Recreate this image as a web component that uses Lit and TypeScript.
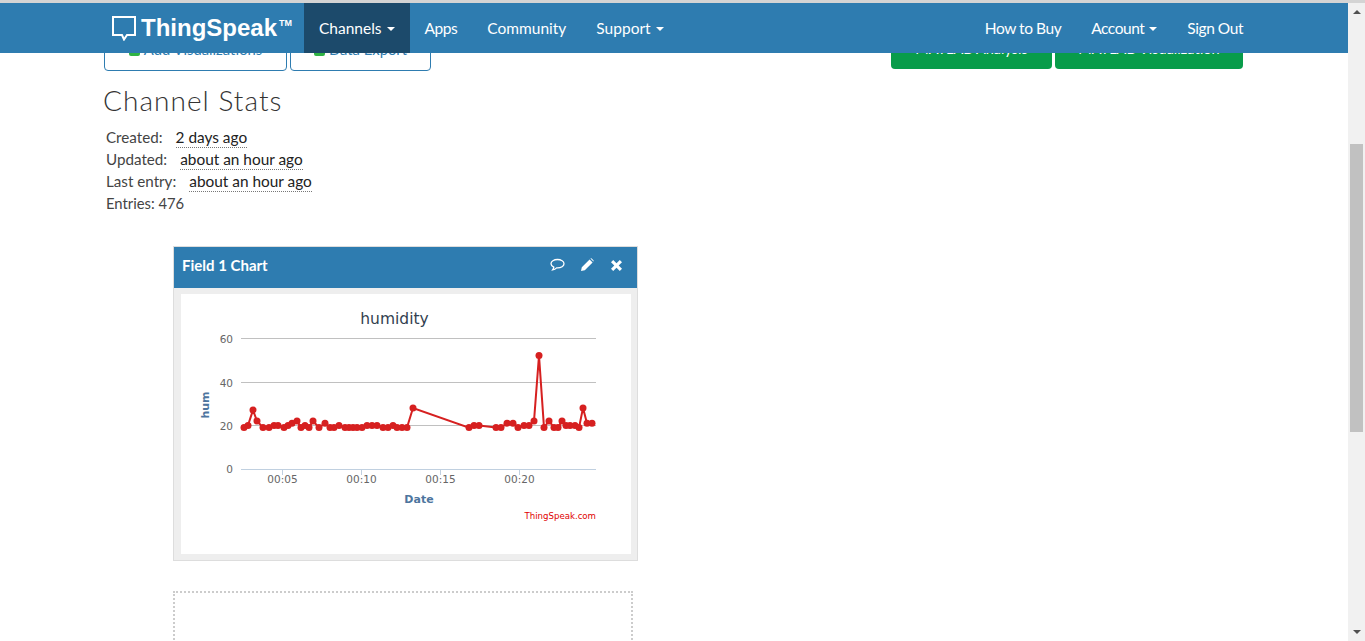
import { LitElement, html, css, svg } from "lit";
import { customElement } from "lit/decorators.js";

// humidity readings as [x pixel, value], read off the chart
const POINTS: [number, number][] = [
  [244, 19], [248, 20], [253, 27], [257, 22], [263, 19], [269, 19], [274, 20], [278, 20],
  [284, 19], [288, 20], [292, 21], [297, 22], [301, 19], [305, 20], [309, 19], [313, 22],
  [319, 19], [325, 21], [330, 19], [334, 19], [339, 20], [345, 19], [349, 19], [353, 19],
  [357, 19], [362, 19], [367, 20], [372, 20], [377, 20], [383, 19], [388, 19], [393, 20],
  [397, 19], [402, 19], [407, 19], [413, 28], [469, 19], [474, 20], [479, 20], [496, 19],
  [501, 19], [507, 21], [513, 21], [518, 19], [524, 20], [529, 20], [534, 22], [539, 52],
  [544, 19], [549, 22], [554, 19], [558, 19], [562, 22], [566, 20], [570, 20], [575, 20],
  [579, 19], [583, 28], [587, 21], [592, 21],
];

const valueY = (v: number) => 469 - v * 2.18;

@customElement("field-chart")
export class FieldChart extends LitElement {
  static styles = css`
    :host {
      display: block;
      background: #fff;
      height: 260px;
    }
    svg {
      display: block;
    }
    text {
      font-family: "DejaVu Sans", sans-serif;
    }
    .title {
      font-size: 15.5px;
      fill: #333f50;
    }
    .tick {
      font-size: 10.5px;
      fill: #666;
    }
    .axis {
      font-size: 11px;
      font-weight: bold;
      fill: #4d759e;
    }
    .credit {
      font-size: 8.6px;
      fill: #e00000;
    }
  `;

  render() {
    const line = POINTS.map(([x, v]) => `${x},${valueY(v).toFixed(1)}`).join(" ");
    return html`<svg width="450" height="260" viewBox="181 294 450 260">
      <text class="title" x="394.5" y="324" text-anchor="middle">humidity</text>
      ${[60, 40, 20].map(
        (v) => svg`
          <line x1="241" x2="596" y1=${Math.round(valueY(v)) + 0.5} y2=${Math.round(valueY(v)) + 0.5} stroke="#c0c0c0" />
          <text class="tick" x="233" y=${valueY(v) + 5} text-anchor="end">${v}</text>`,
      )}
      <line x1="241" x2="596" y1="469.5" y2="469.5" stroke="#c0d0e0" />
      <text class="tick" x="233" y="473" text-anchor="end">0</text>
      ${[
        [282.5, "00:05"],
        [361.5, "00:10"],
        [440.5, "00:15"],
        [519.5, "00:20"],
      ].map(
        ([x, label]) => svg`
          <line x1=${x} x2=${x} y1="470" y2="475" stroke="#c0d0e0" />
          <text class="tick" x=${x} y="483" text-anchor="middle">${label}</text>`,
      )}
      <text class="axis" x="419" y="503" text-anchor="middle">Date</text>
      <text class="axis" transform="translate(209 405) rotate(-90)" text-anchor="middle">hum</text>
      <text class="credit" x="596" y="519" text-anchor="end">ThingSpeak.com</text>
      <polyline points=${line} fill="none" stroke="#d62020" stroke-width="2" />
      ${POINTS.map(
        ([x, v]) => svg`<circle cx=${x} cy=${valueY(v).toFixed(1)} r="3.5" fill="#d62020" />`,
      )}
    </svg>`;
  }
}

@customElement("app-root")
export class AppRoot extends LitElement {
  static styles = css`
    :host {
      display: block;
      position: relative;
      height: 641px;
      overflow: hidden;
      background: #fff;
      color: #444;
      font-family: Lato, "Open Sans", sans-serif;
      font-size: 15.2px;
    }

    .strip {
      position: absolute;
      top: 0;
      left: 0;
      right: 0;
      height: 3px;
      background: #d4d4d4;
      z-index: 3;
    }

    .navbar {
      position: absolute;
      top: 3px;
      left: 0;
      right: 17px;
      height: 50px;
      background: #2e7cb0;
      z-index: 2;
      display: flex;
      align-items: stretch;
      padding-left: 112px;
      padding-right: 90px;
      color: #fff;
    }
    .brand {
      display: flex;
      align-items: center;
      width: 192px;
    }
    .brand-name {
      font-family: "Liberation Sans", Arial, sans-serif;
      font-weight: bold;
      font-size: 24px;
      margin-left: 5px;
    }
    .brand-tm {
      font-family: "Liberation Sans", Arial, sans-serif;
      font-size: 9px;
      font-weight: bold;
      margin-top: -10px;
      margin-left: 2px;
    }
    .nav-item {
      display: flex;
      align-items: center;
      padding: 0 15px 1px;
      font-size: 15.5px;
      white-space: nowrap;
    }
    .nav-item.active {
      background: #1c4a6b;
    }
    .nav-item.tight {
      letter-spacing: -0.45px;
    }
    .spacer {
      flex: 1;
    }
    .caret {
      width: 0;
      height: 0;
      margin-left: 5px;
      margin-top: 2px;
      border-left: 4px solid transparent;
      border-right: 4px solid transparent;
      border-top: 4px solid #fff;
    }

    .scrollbar {
      position: absolute;
      top: 3px;
      right: 0;
      bottom: 0;
      width: 17px;
      background: #f1f1f1;
      z-index: 3;
    }
    .thumb {
      position: absolute;
      top: 141px;
      left: 2px;
      width: 13px;
      height: 288px;
      background: #c1c1c1;
    }
    .arrow {
      position: absolute;
      left: 5px;
      width: 0;
      height: 0;
      border-left: 4px solid transparent;
      border-right: 4px solid transparent;
    }
    .arrow.up {
      top: 7px;
      border-bottom: 4px solid #505050;
    }
    .arrow.down {
      bottom: 7px;
      border-top: 4px solid #505050;
    }

    main {
      padding: 34px 122px 0 104px;
    }
    .actions {
      display: flex;
      align-items: flex-start;
      gap: 3px;
    }
    .btn {
      box-sizing: border-box;
      display: flex;
      align-items: center;
      justify-content: center;
      gap: 4px;
      padding-bottom: 7px;
      border-radius: 4px;
      font-size: 14.8px;
      white-space: nowrap;
    }
    .btn.outline {
      height: 37px;
      border: 1px solid #2e7cb0;
      color: #2e7cb0;
    }
    .btn.solid {
      height: 35px;
      background: #089c4a;
      color: #fff;
      font-size: 14.5px;
    }
    .plus {
      width: 11px;
      height: 11px;
      margin-top: 3px;
      border-radius: 2px;
      background: #2fb344;
    }

    h1 {
      margin: 13px 0 0 -1px;
      font-weight: 300;
      font-size: 28px;
      line-height: 32px;
      color: #333;
      letter-spacing: 1.05px;
    }
    .stats {
      margin: 10px 0 0 2px;
      line-height: 22px;
    }
    .stat {
      display: flex;
      align-items: baseline;
      gap: 13px;
      height: 22px;
    }
    .stat span {
      color: #222;
      font-size: 15.4px;
      line-height: 19px;
      border-bottom: 1px dotted #777;
    }
    .count {
      font-size: 14.8px;
    }

    .panel {
      box-sizing: border-box;
      width: 465px;
      margin: 32px 0 0 69px;
      border: 1px solid #ddd;
      background: #eee;
    }
    .panel-head {
      box-sizing: border-box;
      height: 41px;
      background: #2e7cb0;
      display: flex;
      align-items: center;
      padding: 0 14px 5px 8px;
      color: #fff;
      font-weight: bold;
      font-size: 15px;
    }
    .panel-head .spacer {
      flex: 1;
    }
    .panel-head svg {
      display: block;
      margin-left: 15px;
    }
    .panel-body {
      padding: 6px 6px 6px 7px;
    }

    .dropzone {
      box-sizing: border-box;
      width: 460px;
      height: 320px;
      margin: 30px 0 0 69px;
      border: 2px dotted #ccc;
    }
  `;

  render() {
    return html`
      <div class="strip"></div>
      <nav class="navbar">
        <div class="brand">
          <svg width="24" height="25" viewBox="0 0 24 25">
            <path d="M1 1H23V19H15L12 23.5L10 19H1Z" fill="none" stroke="#fff" stroke-width="2" />
          </svg>
          <span class="brand-name">ThingSpeak</span>
          <span class="brand-tm">TM</span>
        </div>
        <div class="nav-item active">Channels<i class="caret"></i></div>
        <div class="nav-item tight">Apps</div>
        <div class="nav-item">Community</div>
        <div class="nav-item">Support<i class="caret"></i></div>
        <div class="spacer"></div>
        <div class="nav-item tight">How to Buy</div>
        <div class="nav-item tight">Account<i class="caret"></i></div>
        <div class="nav-item tight">Sign Out</div>
      </nav>
      <div class="scrollbar">
        <i class="arrow up"></i>
        <div class="thumb"></div>
        <i class="arrow down"></i>
      </div>

      <main>
        <div class="actions">
          <div class="btn outline" style="width: 183px"><i class="plus"></i>Add Visualizations</div>
          <div class="btn outline" style="width: 141px"><i class="plus"></i>Data Export</div>
          <div class="spacer"></div>
          <div class="btn solid" style="width: 161px">MATLAB Analysis</div>
          <div class="btn solid" style="width: 188px">MATLAB Visualization</div>
        </div>

        <h1>Channel Stats</h1>
        <div class="stats">
          <div class="stat">Created: <span>2 days ago</span></div>
          <div class="stat">Updated: <span>about an hour ago</span></div>
          <div class="stat">Last entry: <span>about an hour ago</span></div>
          <div class="count">Entries: 476</div>
        </div>

        <section class="panel">
          <div class="panel-head">
            Field 1 Chart
            <div class="spacer"></div>
            <svg width="15" height="14" viewBox="0 0 15 14">
              <path
                d="M7.5 1.5C3.9 1.5 1 3.3 1 5.7C1 7.2 2.1 8.4 3.8 9.2C3.7 10.2 3.2 11 2.6 11.8C4.2 11.6 5.6 10.9 6.6 9.9C6.9 9.9 7.2 9.9 7.5 9.9C11.1 9.9 14 8.1 14 5.7C14 3.3 11.1 1.5 7.5 1.5Z"
                fill="none"
                stroke="#fff"
                stroke-width="1.3"
              />
            </svg>
            <svg width="14" height="14" viewBox="0 0 14 14">
              <path d="M1 13L1.8 9.2L9.6 1.4L12.6 4.4L4.8 12.2Z M10.4 0.6Q11 0 11.7 0.6L13.4 2.3Q14 3 13.4 3.6Z" fill="#fff" />
            </svg>
            <svg width="13" height="14" viewBox="0 0 13 14" style="margin-left: 16px">
              <path d="M3.2 2L6.5 5.3L9.8 2L12 4.2L8.7 7.5L12 10.8L9.8 13L6.5 9.7L3.2 13L1 10.8L4.3 7.5L1 4.2Z" fill="#fff" />
            </svg>
          </div>
          <div class="panel-body"><field-chart></field-chart></div>
        </section>

        <div class="dropzone"></div>
      </main>
    `;
  }
}
